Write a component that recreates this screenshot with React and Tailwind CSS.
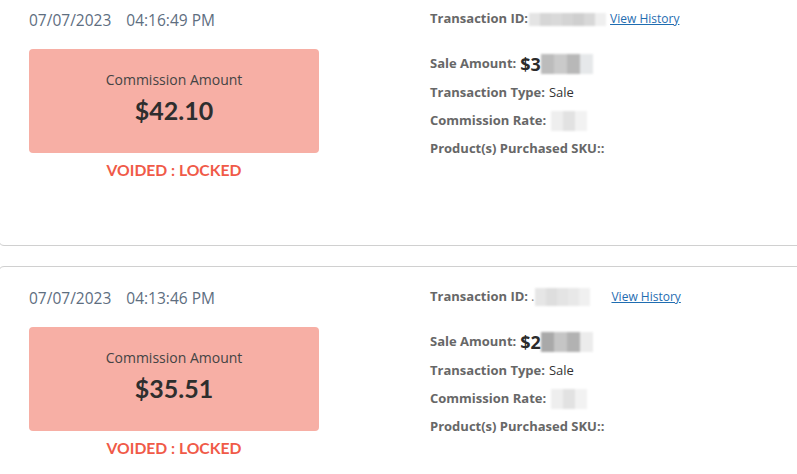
import React from "react";

function Blur({ cells, h = 14, w = 12, className = "" }) {
  return (
    <span className={"inline-flex align-middle blur-[1.2px] " + className}>
      {cells.map((c, i) => (
        <span key={i} style={{ background: c, width: w, height: h }} className="block" />
      ))}
    </span>
  );
}

function Card({ date, time, amount, sale, idCells, idPrefix, saleCells, rateCells, linkGap }) {
  return (
    <div className="h-[258px] rounded-[6px] border border-[#d0d0d0] bg-white pl-[30px] pt-[20px] flex">
      <div className="w-[290px] flex flex-col">
        <div className="h-[22px] leading-[22px] text-[15.5px] text-[#5e6e7f] font-['Open_Sans',sans-serif] whitespace-nowrap">
          <span>{date}</span>
          <span className="ml-[15px]">{time}</span>
        </div>
        <div className="mt-[18px] h-[104px] rounded-[4px] bg-[#f7afa5] flex flex-col items-center pt-[20px]">
          <div className="leading-[22px] text-[14px] text-[#444] font-['Open_Sans',sans-serif]">Commission Amount</div>
          <div className="mt-[1px] leading-[36px] text-[25px] font-bold text-[#2e2e2e] font-['Lato',sans-serif]">{amount}</div>
        </div>
        <div className="mt-[6px] text-center leading-[22px] text-[15.7px] font-bold text-[#f05a48] font-['Lato',sans-serif]">
          VOIDED : LOCKED
        </div>
      </div>
      <div className="ml-[111px] -mt-[4px] flex flex-col font-['Open_Sans',sans-serif] text-[13px]">
        <div className="h-[28px] flex items-center whitespace-nowrap">
          <span className="font-bold text-[#676767]">Transaction ID:</span>
          {idPrefix ? <span className="ml-[3px] text-[#777]">{idPrefix}</span> : null}
          <Blur cells={idCells} h={idPrefix ? 18 : 13} w={11} className="ml-[1px]" />
          <a className="text-[12px] text-[#1f6db1] underline" style={{ marginLeft: linkGap }}>View History</a>
        </div>
        <div className="mt-[17px] h-[28px] flex items-center whitespace-nowrap">
          <span className="font-bold text-[#676767]">Sale Amount:</span>
          <span className="ml-[4px] text-[18px] font-bold text-[#2b2b2b]">{sale}</span>
          <Blur cells={saleCells} h={20} w={13} />
        </div>
        <div className="mt-[1px] h-[28px] flex items-center whitespace-nowrap">
          <span className="font-bold text-[#676767]">Transaction Type:</span>
          <span className="ml-[4px] text-[#333]">Sale</span>
        </div>
        <div className="h-[28px] flex items-center whitespace-nowrap">
          <span className="font-bold text-[#676767]">Commission Rate:</span>
          <Blur cells={rateCells} h={20} w={12} className="ml-[5px]" />
        </div>
        <div className="h-[28px] flex items-center whitespace-nowrap">
          <span className="font-bold text-[#676767]">Product(s) Purchased SKU::</span>
        </div>
      </div>
    </div>
  );
}

export default function App() {
  return (
    <div className="w-[797px] h-[474px] overflow-hidden bg-white">
      <div className="-mt-[12px] -ml-[2px] w-[830px] flex flex-col gap-[20px]">
        <Card
          date="07/07/2023"
          time="04:16:49 PM"
          amount="$42.10"
          sale="$3"
          linkGap={4}
          idCells={["#e4e4e4", "#d6d6d6", "#d9d9d9", "#d4d4d4", "#cfcfcf", "#d8d8d8", "#efefef"]}
          saleCells={["#bcbcbc", "#cacaca", "#b8b8b8", "#e6e8ea"]}
          rateCells={["#eeeeee", "#e2e2e2", "#f2f2f2"]}
        />
        <Card
          date="07/07/2023"
          time="04:13:46 PM"
          amount="$35.51"
          sale="$2"
          idPrefix="."
          linkGap={21}
          idCells={["#e6e6e6", "#dedede", "#e4e4e4", "#e8e8e8", "#f0f0f0"]}
          saleCells={["#a9a9a9", "#c5c5c5", "#b2b2b2", "#ececec"]}
          rateCells={["#eeeeee", "#e2e2e2", "#f2f2f2"]}
        />
      </div>
    </div>
  );
}
